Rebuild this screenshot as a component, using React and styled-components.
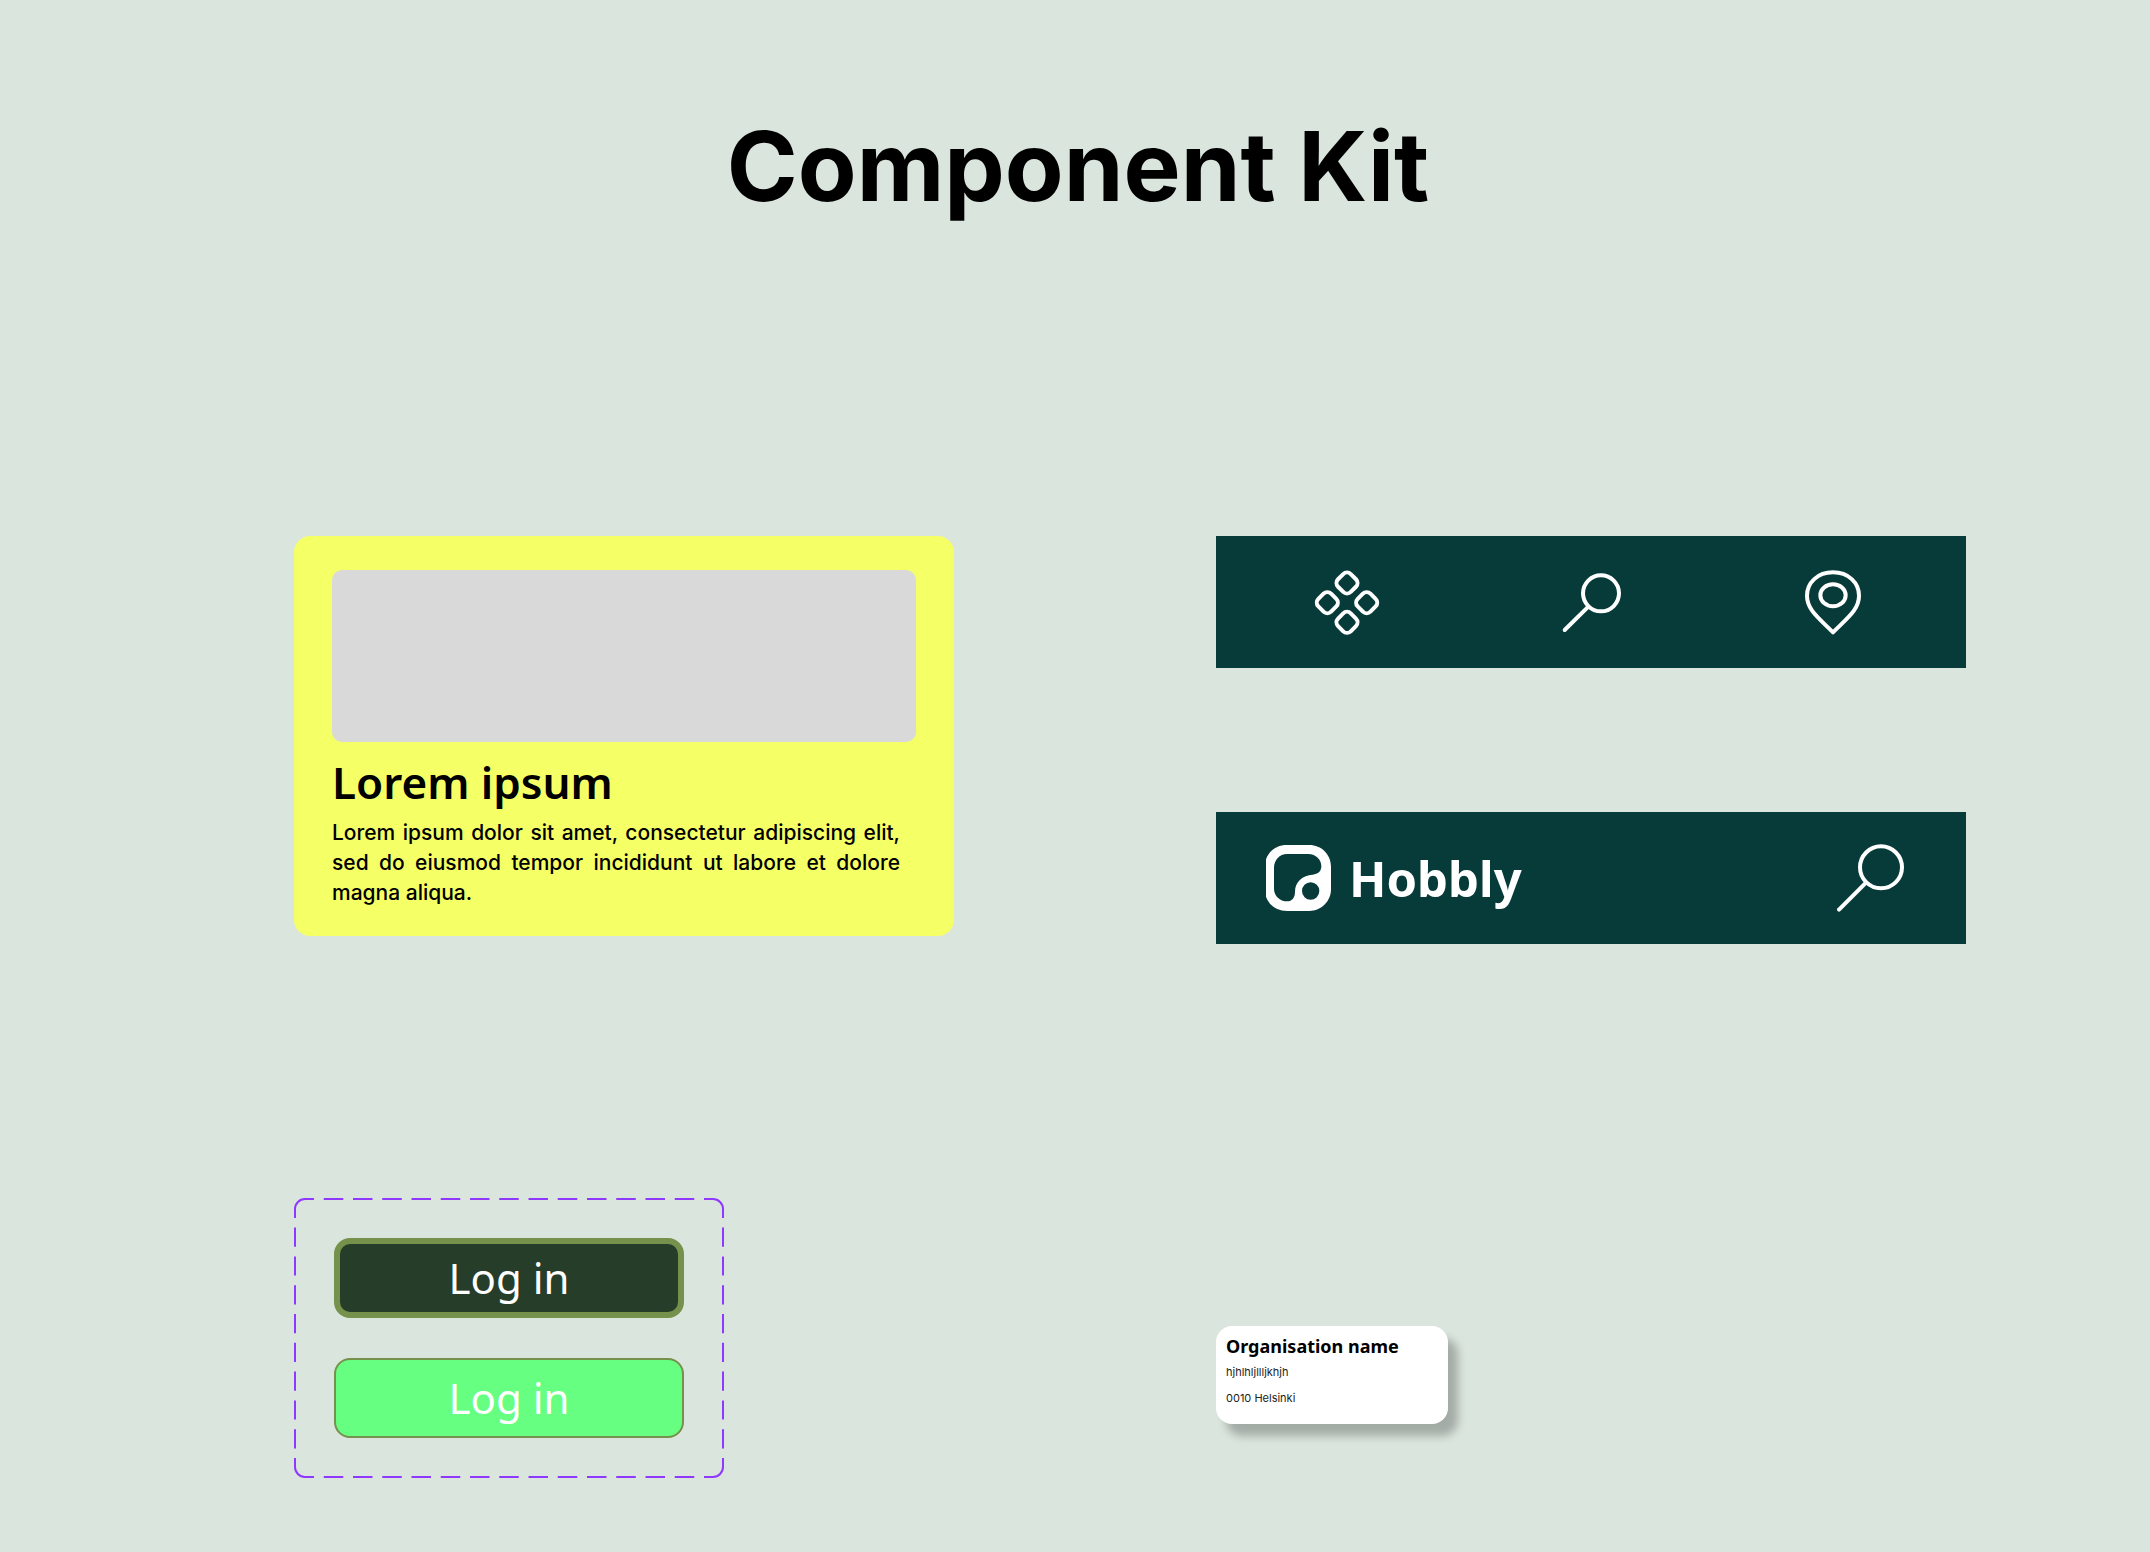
import React from "react";
import styled, { createGlobalStyle } from "styled-components";

const display = `"Noto Sans", "Open Sans", sans-serif`;
const body = `Inter, "Liberation Sans", sans-serif`;

const GlobalStyle = createGlobalStyle`
  * { box-sizing: border-box; }
  body { margin: 0; background: #dae5dd; color: #000; font-family: ${body}; }
`;

const Page = styled.main`
  padding: 108px 184px 74px 294px;
  min-height: 100vh;
`;

const PageTitle = styled.h1`
  margin: 0 0 312px;
  padding-right: 104px;
  text-align: center;
  font-size: 96px;
  line-height: 116px;
  font-weight: 700;
`;

const Grid = styled.div`
  display: grid;
  grid-template-columns: 660fr 750fr;
  gap: 254px 262px;
  align-items: start;
`;

const Card = styled.article`
  min-height: 400px;
  padding: 34px 38px 20px;
  border-radius: 16px;
  background: #f5ff66;
`;

const CardImage = styled.div`
  height: 172px;
  border-radius: 10px;
  background: #d9d9d9;
`;

const CardTitle = styled.h2`
  margin: 8px 0 0;
  font: 600 44px/64px ${display};
`;

const CardText = styled.p`
  margin: 4px 16px 0 0;
  font-size: 21px;
  line-height: 30px;
  font-weight: 500;
  text-align: justify;
`;

const Bars = styled.div`
  display: grid;
  gap: 144px;
`;

const Bar = styled.div`
  display: flex;
  align-items: center;
  justify-content: space-between;
  height: 132px;
  padding: ${(p) => p.$padding};
  background: #073b3a;
`;

const IconLink = styled.a`
  display: flex;
  color: #fff;
`;

const IconButton = styled.button`
  display: flex;
  padding: 0;
  border: 0;
  background: none;
  color: #fff;
  cursor: pointer;
`;

const Icon = styled.svg`
  width: ${(p) => p.$size}px;
  height: ${(p) => p.$size}px;
  fill: none;
  stroke: currentColor;
  stroke-width: 12;
  stroke-linecap: round;
  stroke-linejoin: round;
`;

const Brand = styled.a`
  display: flex;
  align-items: center;
  gap: 18px;
  color: #fff;
  font: 700 49px/64px ${display};
  text-decoration: none;
`;

const Mark = styled.svg`
  width: 65px;
  height: 66px;
`;

const Variants = styled.div`
  position: relative;
  display: grid;
  gap: 40px;
  width: 430px;
  padding: 40px;
`;

const DashedOutline = styled.svg`
  position: absolute;
  inset: 0;
  width: 100%;
  height: 100%;
  fill: none;
  stroke: #8f38ff;
  stroke-width: 2;
  pointer-events: none;
`;

const LoginButton = styled.button`
  height: 80px;
  padding: 0;
  border: ${(p) => (p.$dark ? 6 : 2)}px solid #75914b;
  border-radius: 16px;
  background: ${(p) => (p.$dark ? "#263d2a" : "#66ff82")};
  color: #fff;
  font: 400 42px/56px ${display};
  cursor: pointer;
`;

const OrgCard = styled.article`
  width: 232px;
  min-height: 98px;
  margin-top: 128px;
  padding: 8px 10px;
  border-radius: 16px;
  background: #fff;
  box-shadow: 10px 12px 8px rgba(0, 0, 0, 0.25);
`;

const OrgName = styled.h3`
  margin: 0 0 6px;
  font: 700 18px/24px ${display};
`;

const OrgLine = styled.p`
  margin: 0 0 10px;
  font-size: 11px;
  line-height: 16px;
  color: #222;
`;

const tiles = [[171, 99], [112, 158], [230, 158], [171, 217]];

function TilesIcon() {
  return (
    <Icon $size={66} viewBox="72 57 198 198" aria-hidden="true">
      {tiles.map(([x, y]) => (
        <rect key={`${x}-${y}`} x={x - 27} y={y - 27} width="54" height="54" rx="16" transform={`rotate(45 ${x} ${y})`} />
      ))}
    </Icon>
  );
}

function SearchIcon() {
  return (
    <Icon $size={66} viewBox="51 57 198 198" aria-hidden="true">
      <circle cx="183" cy="130" r="54" />
      <path d="M145 170 74 240" />
    </Icon>
  );
}

function LargeSearchIcon() {
  return (
    <Icon $size={70} viewBox="108 129 210 210" aria-hidden="true">
      <circle cx="243" cy="202" r="63" />
      <path d="M198 248 117 329" />
    </Icon>
  );
}

function PinIcon() {
  return (
    <Icon $size={66} viewBox="60 57 198 198" aria-hidden="true">
      <path d="M159 67C205 67 237 98 237 137C237 179 203 203 159 247C115 203 81 179 81 137C81 98 113 67 159 67Z" />
      <ellipse cx="159" cy="136" rx="38" ry="33" />
    </Icon>
  );
}

function HobblyMark() {
  return (
    <Mark viewBox="198 135 195 198" aria-hidden="true">
      <path
        fill="#fff"
        fillRule="evenodd"
        d="M261 135H328C364 135 393 163 393 200V268C393 304 364 333 328 333H261C231 333 209 318 198 290V178C209 150 231 135 261 135ZM261 162C239 162 222 180 222 204V266C222 288 240 304 261 304C277 304 285 292 285 275C285 245 308 226 338 224C354 223 364 214 364 199C364 179 348 162 325 162ZM332 247A26 26 0 1 0 332 299A26 26 0 1 0 332 247Z"
      />
    </Mark>
  );
}

function Outline() {
  return (
    <DashedOutline viewBox="0 0 430 280" aria-hidden="true">
      <path d="M1 20V11A10 10 0 0 1 11 1H20M410 1H419A10 10 0 0 1 429 11V20M429 260V269A10 10 0 0 1 419 279H410M20 279H11A10 10 0 0 1 1 269V260" />
      <path strokeDasharray="19.5 9.75" strokeDashoffset="19.5" d="M20 1H410M20 279H410" />
      <path strokeDasharray="19.2 9.6" strokeDashoffset="19.2" d="M1 20V260M429 20V260" />
    </DashedOutline>
  );
}

export default function App() {
  return (
    <>
      <GlobalStyle />
      <Page>
        <PageTitle>Component Kit</PageTitle>
        <Grid>
          <Card>
            <CardImage />
            <CardTitle>Lorem ipsum</CardTitle>
            <CardText>
              Lorem ipsum dolor sit amet, consectetur adipiscing elit, sed do eiusmod tempor
              incididunt ut labore et dolore magna aliqua.
            </CardText>
          </Card>
          <Bars>
            <Bar as="nav" $padding="0 100px 0 98px">
              <IconLink href="#categories" aria-label="Categories"><TilesIcon /></IconLink>
              <IconLink href="#search" aria-label="Search"><SearchIcon /></IconLink>
              <IconLink href="#map" aria-label="Map"><PinIcon /></IconLink>
            </Bar>
            <Bar as="header" $padding="0 60px 0 50px">
              <Brand href="#home"><HobblyMark />Hobbly</Brand>
              <IconButton type="button" aria-label="Search"><LargeSearchIcon /></IconButton>
            </Bar>
          </Bars>
          <Variants>
            <Outline />
            <LoginButton type="button" $dark>Log in</LoginButton>
            <LoginButton type="button">Log in</LoginButton>
          </Variants>
          <OrgCard>
            <OrgName>Organisation name</OrgName>
            <OrgLine>hjhlhljllljkhjh</OrgLine>
            <OrgLine>0010 Helsinki</OrgLine>
          </OrgCard>
        </Grid>
      </Page>
    </>
  );
}
